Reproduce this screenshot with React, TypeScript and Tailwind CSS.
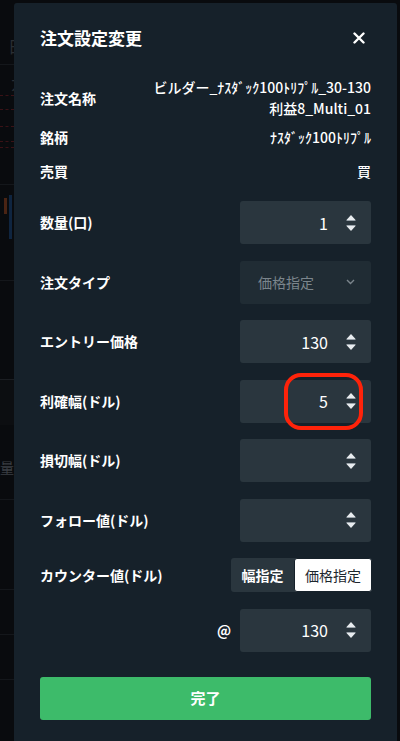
import React from "react";

const font = { fontFamily: '"Noto Sans CJK JP", "Noto Sans", sans-serif' };

const Stepper = () => (
  <svg width="10" height="18" viewBox="0 0 10 18" className="shrink-0">
    <path d="M5 1 L9.5 6 L0.5 6 Z" fill="#e8ecef" />
    <rect x="0.5" y="6" width="9" height="1" fill="#9aa3aa" />
    <path d="M0.5 12 L9.5 12 L5 17 Z" fill="#e8ecef" />
    <rect x="0.5" y="11" width="9" height="1" fill="#9aa3aa" />
  </svg>
);

const NumberInput = ({ value }: { value?: string }) => (
  <div className="w-[131px] h-[43px] rounded-[3px] bg-[#2a363e] flex items-center justify-end pr-[15px]">
    <span className="text-[16px] text-white mr-[18px]">{value}</span>
    <Stepper />
  </div>
);

const Label = ({ children }: { children: React.ReactNode }) => (
  <span className="text-[14px] text-white font-bold">{children}</span>
);

const InputRow = ({ label, value }: { label: string; value?: string }) => (
  <div className="flex items-center justify-between">
    <Label>{label}</Label>
    <NumberInput value={value} />
  </div>
);

// dimmed chart peeking out on the left of the dialog
const ChartStrip = () => (
  <div className="w-[14px] shrink-0 overflow-hidden flex flex-col text-[#2a2e33] whitespace-nowrap">
    <div className="h-[65px] border-b border-[#14171b] pt-[34px] pl-[8px] text-[16px]">日</div>
    <div className="h-[31px] border-b border-dashed border-[#3a1216] pl-[10px] text-[16px] leading-[20px] pt-[8px]">カ</div>
    <div className="h-[14px] border-b border-dashed border-[#3a1216]" />
    <div className="h-[17px] border-b border-dashed border-[#3a1216]" />
    <div className="h-[15px] border-b border-dashed border-[#3a1216]" />
    <div className="h-[6px] border-b border-dashed border-[#3a1216]" />
    <div className="h-[37px] border-b border-[#14171b]" />
    <div className="h-[96px] border-b border-[#14171b] flex gap-[2px] pl-[4px] pt-[10px]">
      <div className="w-[3px] h-[16px] mt-[3px] bg-[#4a2414]" />
      <div className="w-[3px] h-[44px] bg-[#0f2540]" />
    </div>
    <div className="h-[99px] border-b border-[#1b1e22]" />
    <div className="h-[45px] bg-[#0c0e11]" />
    <div className="h-[75px] border-b border-[#14171b] pt-[32px] text-[14px] text-[#3a3e43]">量(</div>
    <div className="h-[90px] border-b border-[#14171b]" />
    <div className="h-[45px] border-b border-[#14171b]" />
    <div className="h-[45px] border-b border-[#14171b]" />
  </div>
);

export default function App() {
  return (
    <div className="flex w-[400px] h-[741px] overflow-hidden bg-[#090b0e]" style={font}>
      <ChartStrip />

      <div className="flex-1 mt-[3px] rounded-t-[3px] bg-[#16212a] px-[26px] pt-[23px] flex flex-col">
        <div className="flex items-center justify-between h-[24px]">
          <h1 className="text-[17px] font-bold text-white">注文設定変更</h1>
          <svg width="12" height="12" viewBox="0 0 12 12" className="mr-[6px]">
            <path
              d="M1.5 1.5 L10.5 10.5 M10.5 1.5 L1.5 10.5"
              stroke="#ffffff"
              strokeWidth="2.4"
              strokeLinecap="round"
            />
          </svg>
        </div>

        <div className="flex items-center justify-between mt-[27px] text-[14px] text-white">
          <Label>注文名称</Label>
          <div className="text-right leading-[21px] font-medium">
            <div>ビルダー_ﾅｽﾀﾞｯｸ100ﾄﾘﾌﾟﾙ_30-130</div>
            <div>利益8_Multi_01</div>
          </div>
        </div>
        <div className="flex items-center justify-between mt-[8px] h-[21px] text-[14px] text-white">
          <Label>銘柄</Label>
          <span className="font-medium">ﾅｽﾀﾞｯｸ100ﾄﾘﾌﾟﾙ</span>
        </div>
        <div className="flex items-center justify-between mt-[13px] h-[21px] text-[14px] text-white">
          <Label>売買</Label>
          <span className="font-medium">買</span>
        </div>

        <div className="flex flex-col gap-[16.5px] mt-[19px]">
          <InputRow label="数量(口)" value="1" />

          <div className="flex items-center justify-between">
            <Label>注文タイプ</Label>
            <div className="w-[131px] h-[43px] rounded-[3px] bg-[#202c34] flex items-center justify-between pl-[18px] pr-[16px]">
              <span className="text-[14px] text-[#7b858c]">価格指定</span>
              <svg width="9" height="6" viewBox="0 0 9 6">
                <path d="M1 1 L4.5 4.5 L8 1" stroke="#7b858c" strokeWidth="1.4" fill="none" />
              </svg>
            </div>
          </div>

          <InputRow label="エントリー価格" value="130" />

          <div className="relative">
            <InputRow label="利確幅(ドル)" value="5" />
            {/* red annotation ring */}
            <div className="absolute left-[244px] top-[-7px] w-[79px] h-[57px] rounded-[17px] border-[4px] border-[#ff230a]" />
          </div>

          <InputRow label="損切幅(ドル)" />
          <InputRow label="フォロー値(ドル)" />

          <div className="flex items-center justify-between">
            <Label>カウンター値(ドル)</Label>
            <div className="flex h-[34px] w-[141px] rounded-[3px] bg-[#2a363e] mr-[-1px]">
              <div className="w-[63px] flex items-center justify-center text-[14px] font-bold text-white">
                幅指定
              </div>
              <div className="flex-1 flex items-center justify-center rounded-[3px] bg-white text-[14px] text-[#1d262d] border border-[#16212a]">
                価格指定
              </div>
            </div>
          </div>

          <div className="flex items-center justify-end">
            <span className="text-[14px] text-white font-bold mr-[9px]">@</span>
            <NumberInput value="130" />
          </div>
        </div>

        <button className="mt-[25px] w-full h-[43px] rounded-[3px] bg-[#3dbb6a] text-white text-[15px] font-bold">
          完了
        </button>
      </div>

      <div className="w-[3px] shrink-0" />
    </div>
  );
}
